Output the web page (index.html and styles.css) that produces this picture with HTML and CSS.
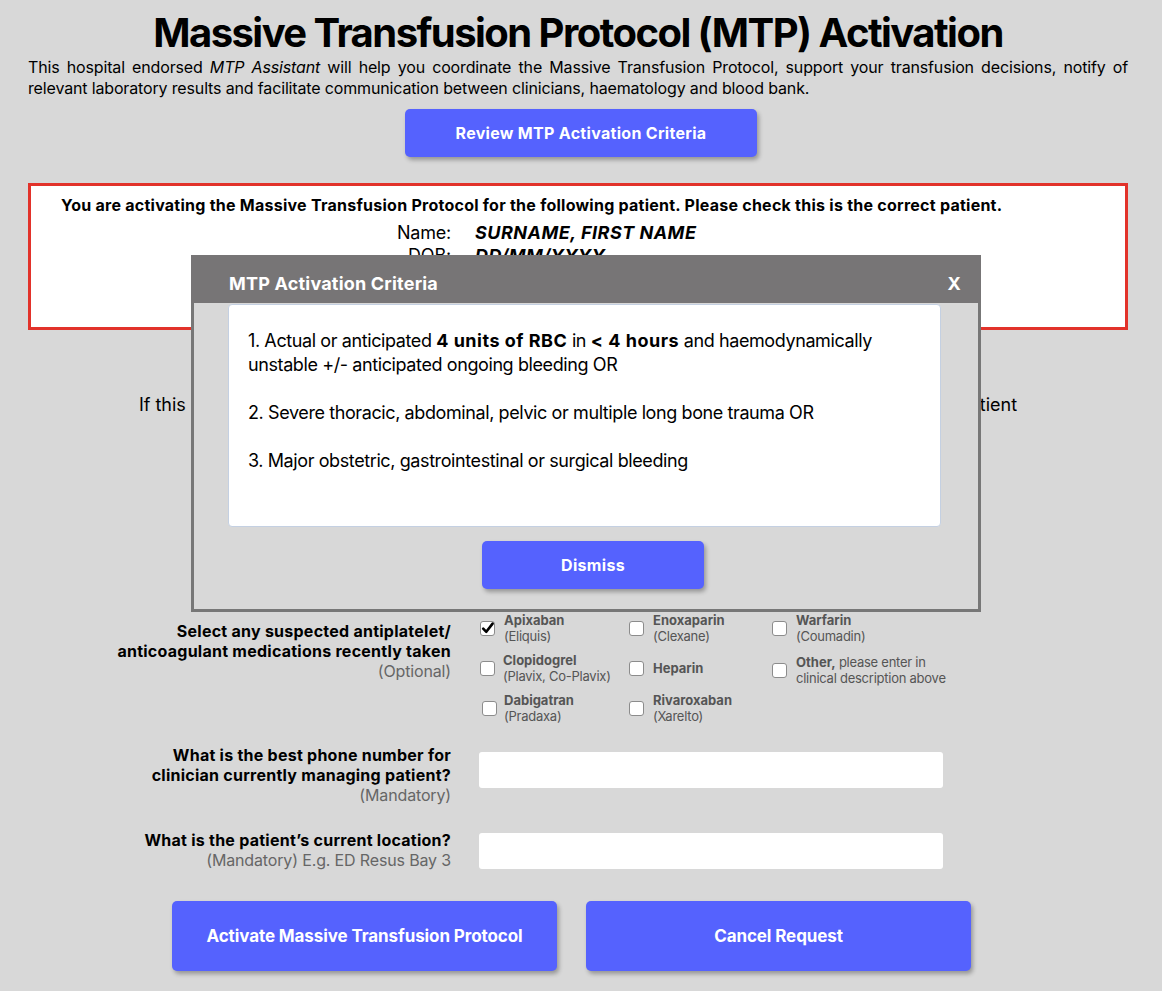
FILE: index.html
```html
<!DOCTYPE html>
<html lang="en">
<head>
<meta charset="utf-8">
<title>Massive Transfusion Protocol (MTP) Activation</title>
<link rel="stylesheet" href="styles.css">
</head>
<body>
<div class="page">
  <h1 class="title">Massive Transfusion Protocol (MTP) Activation</h1>
  <p class="intro">This hospital endorsed <em>MTP Assistant</em> will help you coordinate the Massive Transfusion Protocol, support your transfusion decisions, notify of relevant laboratory results and facilitate communication between clinicians, haematology and blood bank.</p>
  <button class="btn btn-review" type="button">Review MTP Activation Criteria</button>

  <section class="patient-box">
    <p class="patient-warning">You are activating the Massive Transfusion Protocol for the following patient. Please check this is the correct patient.</p>
    <div class="patient-grid">
      <span class="pl">Name:</span><span class="pv">SURNAME, FIRST NAME</span>
      <span class="pl">DOB:</span><span class="pv">DD/MM/YYYY</span>
      <span class="pl">MRN:</span><span class="pv">0000000</span>
    </div>
  </section>

  <p class="notice">If this is not the correct patient, please cancel and re-launch the MTP Assistant from the correct patient</p>

  <form class="form">
    <div class="row row-select">
      <label class="lbl">Select the clinical setting</label>
      <div class="field field-select"></div>
    </div>
    <div class="row row-brief">
      <label class="lbl">Brief clinical description</label>
      <div class="field field-area"></div>
    </div>
    <div class="row row-meds">
      <label class="lbl lbl-meds">Select any suspected antiplatelet/<br>anticoagulant medications recently taken<span class="hint">(Optional)</span></label>
      <div class="meds">
        <div class="med"><span class="cb checked"><svg viewBox="0 0 15 15" width="15" height="15"><path d="M3.2 7.6 L6.3 10.8 L12.6 2.6" fill="none" stroke="#000" stroke-width="2.6" stroke-linecap="round" stroke-linejoin="round"/></svg></span><span class="mt"><b>Apixaban</b>(Eliquis)</span></div>
        <div class="med"><span class="cb"></span><span class="mt"><b>Enoxaparin</b>(Clexane)</span></div>
        <div class="med"><span class="cb"></span><span class="mt"><b>Warfarin</b>(Coumadin)</span></div>
        <div class="med med-tight"><span class="cb"></span><span class="mt"><b>Clopidogrel</b>(Plavix, Co-Plavix)</span></div>
        <div class="med"><span class="cb"></span><span class="mt"><b>Heparin</b></span></div>
        <div class="med med-other"><span class="cb"></span><span class="mt"><b class="inline">Other,</b> please enter in<br>clinical description above</span></div>
        <div class="med med-shift"><span class="cb"></span><span class="mt"><b>Dabigatran</b>(Pradaxa)</span></div>
        <div class="med"><span class="cb"></span><span class="mt"><b>Rivaroxaban</b>(Xarelto)</span></div>
      </div>
    </div>
    <div class="row row-phone">
      <label class="lbl">What is the best phone number for<br>clinician currently managing patient?<span class="hint">(Mandatory)</span></label>
      <input class="field field-input field-phone" type="text">
    </div>
    <div class="row row-loc">
      <label class="lbl">What is the patient’s current location?<span class="hint">(Mandatory) E.g. ED Resus Bay 3</span></label>
      <input class="field field-input field-loc" type="text">
    </div>
    <div class="actions">
      <button class="btn btn-big" type="button">Activate Massive Transfusion Protocol</button>
      <button class="btn btn-big" type="button">Cancel Request</button>
    </div>
  </form>
</div>

<div class="modal" role="dialog" aria-label="MTP Activation Criteria">
  <div class="modal-header">
    <span class="modal-title">MTP Activation Criteria</span>
    <span class="modal-close">X</span>
  </div>
  <div class="modal-body">
    <div class="criteria">
      <p>1. Actual or anticipated <b>4 units of RBC</b> in <b>&lt; 4 hours</b> and haemodynamically unstable +/- anticipated ongoing bleeding OR</p>
      <p>2. Severe thoracic, abdominal, pelvic or multiple long bone trauma OR</p>
      <p>3. Major obstetric, gastrointestinal or surgical bleeding</p>
    </div>
    <button class="btn btn-dismiss" type="button">Dismiss</button>
  </div>
</div>
</body>
</html>
```

FILE: styles.css
```css
* { box-sizing: border-box; }

html, body { margin: 0; padding: 0; }

body {
  background: #d8d8d8;
  font-family: Inter, "Noto Sans", "Liberation Sans", sans-serif;
  color: #000;
  min-height: 991px;
}

.page {
  width: 1100px;
  margin-left: 28px;
  padding-top: 9px;
}

.title {
  margin: 0;
  font-size: 40px;
  line-height: 48px;
  font-weight: 700;
  text-align: center;
  letter-spacing: -1.55px;
}

.intro {
  margin: 0;
  font-size: 16px;
  line-height: 21px;
  text-align: justify;
  letter-spacing: -0.15px;
}

.btn {
  font-family: inherit;
  border: 0;
  background: #5562fe;
  color: #fff;
  font-weight: 700;
  border-radius: 5px;
  box-shadow: 2px 3px 4px rgba(0, 0, 0, 0.3);
  cursor: pointer;
  padding: 0;
}

.btn-review {
  display: block;
  margin: 10px 0 0 377px;
  width: 352px;
  height: 48px;
  font-size: 16px;
  letter-spacing: 0.3px;
}

.patient-box {
  margin-top: 26px;
  height: 147px;
  border: 3px solid #e2322a;
  background: #fff;
  padding: 9px 30px 0;
}

.patient-warning {
  margin: 0;
  font-size: 16px;
  line-height: 20px;
  font-weight: 700;
  letter-spacing: 0.25px;
}

.patient-grid {
  display: grid;
  grid-template-columns: 390px auto;
  column-gap: 24px;
  margin-top: 6px;
  font-size: 18px;
  line-height: 23px;
}

.pl { text-align: right; letter-spacing: -0.2px; }
.pv { font-weight: 700; font-style: italic; letter-spacing: 0.5px; }

.notice {
  margin: 63px 0 0;
  font-size: 18px;
  line-height: 24px;
  text-align: center;
}

.row {
  display: grid;
  grid-template-columns: 423px 464px;
  column-gap: 28px;
  align-items: start;
}

.lbl {
  text-align: right;
  font-weight: 700;
  font-size: 16px;
  line-height: 20px;
  letter-spacing: 0.25px;
}

.hint {
  display: block;
  font-weight: 400;
  color: #666;
  letter-spacing: -0.15px;
}

.field {
  background: #fff;
  border: 0;
  border-radius: 3px;
}

.row-select { margin-top: 29px; }
.row-select .lbl { margin-top: 8px; }
.field-select { height: 36px; }

.row-brief { margin-top: 22px; }
.row-brief .lbl { margin-top: 36px; }
.field-area { height: 90px; }

.row-meds { margin-top: 18px; }
.lbl-meds { margin-top: 9px; }

.meds {
  display: grid;
  grid-template-columns: 149px 143px 180px;
  grid-template-rows: 32px 36px 32px;
  row-gap: 6px;
  padding-left: 1px;
}

.med {
  display: flex;
  align-items: center;
  gap: 9px;
  font-size: 13px;
  line-height: 16px;
  color: #555;
  letter-spacing: -0.25px;
}

.med-tight { gap: 8px; }
.med-shift { padding-left: 2px; gap: 7px; }
.med-other { padding-top: 4px; }

.mt b {
  display: block;
  font-weight: 700;
  letter-spacing: 0;
}

.mt b.inline { display: inline; }

.cb {
  width: 15px;
  height: 15px;
  flex: none;
  border: 1px solid #8c8c8c;
  border-radius: 3px;
  background: #fff;
  position: relative;
}

.cb.checked svg {
  position: absolute;
  left: -1px;
  top: -1px;
}

.row-phone { margin-top: 21px; }
.field-phone { margin-top: 7px; height: 36px; width: 464px; }

.row-loc { margin-top: 25px; }
.field-loc { margin-top: 3px; height: 36px; width: 464px; }

.actions {
  display: flex;
  gap: 29px;
  margin: 31px 0 0 144px;
}

.btn-big {
  width: 385px;
  height: 70px;
  font-size: 17px;
  letter-spacing: -0.1px;
}

/* Modal overlay */
.modal {
  position: absolute;
  left: 191px;
  top: 255px;
  width: 790px;
}

.modal-header {
  height: 48px;
  background: #777576;
  color: #fff;
  display: flex;
  align-items: center;
  justify-content: space-between;
  padding: 9px 20px 0 38px;
  font-weight: 700;
  font-size: 18px;
  letter-spacing: 0.2px;
}

.modal-body {
  background: #d8d8d8;
  border: 3px solid #777;
  border-top: 0;
  padding: 1px 37px 20px 34px;
}

.criteria {
  height: 223px;
  background: #fff;
  border: 1px solid #c4d0e2;
  border-radius: 4px;
  padding: 24px 20px 0 19px;
  font-size: 18px;
  line-height: 24px;
  letter-spacing: -0.4px;
}

.criteria b { letter-spacing: 0.5px; }

.criteria p { margin: 0 0 24px; }

.btn-dismiss {
  display: block;
  margin: 14px 0 0 254px;
  width: 222px;
  height: 48px;
  font-size: 16px;
  letter-spacing: 0.3px;
}
```
